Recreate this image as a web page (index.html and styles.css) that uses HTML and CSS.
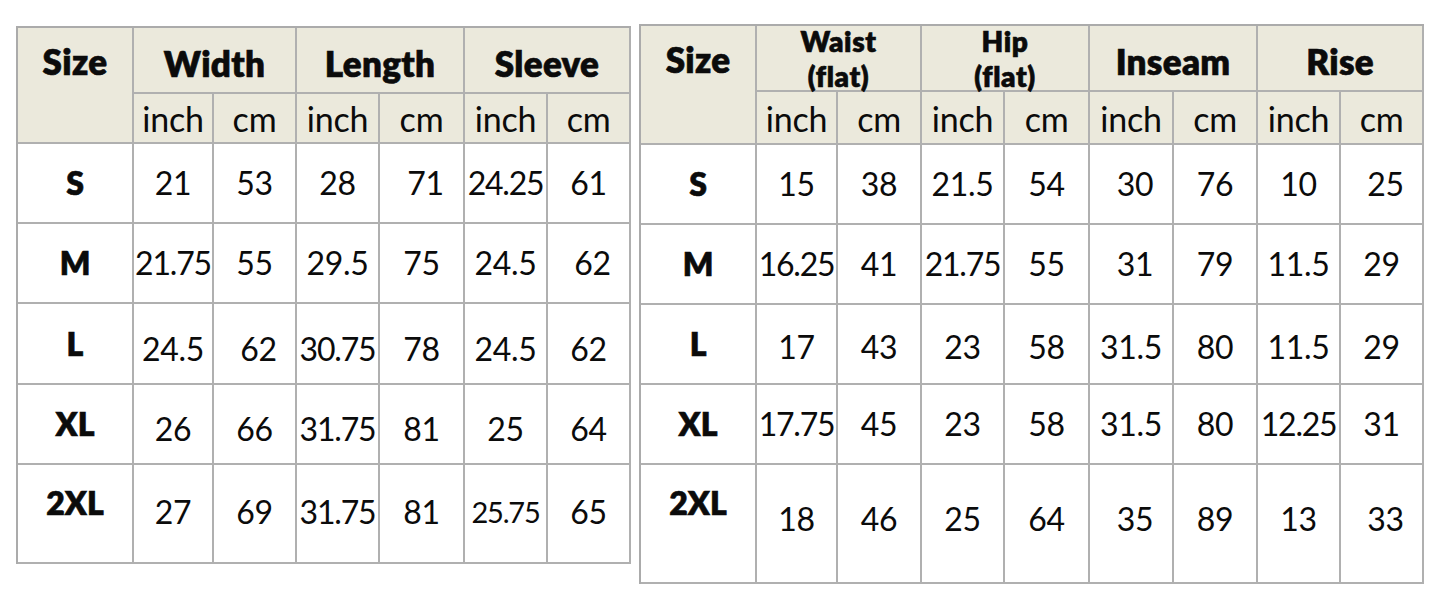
FILE: index.html
```html
<!DOCTYPE html>
<html lang="en">
<head>
<meta charset="utf-8">
<title>Size chart</title>
<link rel="stylesheet" href="styles.css">
</head>
<body>
<main class="sheet">
  <table class="chart chart-top">
    <colgroup>
      <col class="c116"><col class="c80"><col class="c83"><col class="c83"><col class="c85"><col class="c83"><col class="c83">
    </colgroup>
    <thead>
      <tr class="h1">
        <th rowspan="2" class="size-h">Size</th>
        <th colspan="2">Width</th>
        <th colspan="2">Length</th>
        <th colspan="2">Sleeve</th>
      </tr>
      <tr class="h2 h2a">
        <th class="unit">inch</th><th class="unit">cm</th>
        <th class="unit">inch</th><th class="unit">cm</th>
        <th class="unit">inch</th><th class="unit">cm</th>
      </tr>
    </thead>
    <tbody>
      <tr class="r80">
        <th class="lbl">S</th><td>21</td><td>53</td><td>28</td><td class="shr">71</td><td class="tight">24.25</td><td>61</td>
      </tr>
      <tr class="r80">
        <th class="lbl">M</th><td class="tight">21.75</td><td>55</td><td>29.5</td><td>75</td><td>24.5</td><td class="shr">62</td>
      </tr>
      <tr class="r81 low">
        <th class="lbl">L</th><td>24.5</td><td class="shr">62</td><td class="tight">30.75</td><td>78</td><td>24.5</td><td>62</td>
      </tr>
      <tr class="r80 low">
        <th class="lbl">XL</th><td>26</td><td>66</td><td class="tight">31.75</td><td>81</td><td>25</td><td>64</td>
      </tr>
      <tr class="r99 lasta">
        <th class="lbl up">2XL</th><td>27</td><td>69</td><td class="tight">31.75</td><td>81</td><td class="tight small">25.75</td><td>65</td>
      </tr>
    </tbody>
  </table>

  <table class="chart chart-right">
    <colgroup>
      <col class="c116"><col class="c81"><col class="c84"><col class="c83"><col class="c85"><col class="c84"><col class="c84"><col class="c83"><col class="c83">
    </colgroup>
    <thead>
      <tr class="h1">
        <th rowspan="2" class="size-h">Size</th>
        <th colspan="2"><div class="two">Waist<br>(flat)</div></th>
        <th colspan="2"><div class="two">Hip<br>(flat)</div></th>
        <th colspan="2">Inseam</th>
        <th colspan="2">Rise</th>
      </tr>
      <tr class="h2 h2b">
        <th class="unit">inch</th><th class="unit">cm</th>
        <th class="unit">inch</th><th class="unit">cm</th>
        <th class="unit">inch</th><th class="unit">cm</th>
        <th class="unit">inch</th><th class="unit">cm</th>
      </tr>
    </thead>
    <tbody>
      <tr class="r80">
        <th class="lbl">S</th><td>15</td><td>38</td><td>21.5</td><td>54</td><td class="shr">30</td><td>76</td><td>10</td><td class="shr">25</td>
      </tr>
      <tr class="r80">
        <th class="lbl">M</th><td class="tight">16.25</td><td>41</td><td class="tight">21.75</td><td>55</td><td class="shr">31</td><td>79</td><td>11.5</td><td>29</td>
      </tr>
      <tr class="r80 lowb">
        <th class="lbl">L</th><td>17</td><td>43</td><td>23</td><td>58</td><td>31.5</td><td>80</td><td>11.5</td><td>29</td>
      </tr>
      <tr class="r80">
        <th class="lbl">XL</th><td class="tight">17.75</td><td>45</td><td>23</td><td>58</td><td>31.5</td><td>80</td><td class="tight">12.25</td><td>31</td>
      </tr>
      <tr class="r119 lastb">
        <th class="lbl up2">2XL</th><td>18</td><td>46</td><td>25</td><td>64</td><td class="shr">35</td><td>89</td><td>13</td><td class="shr">33</td>
      </tr>
    </tbody>
  </table>
</main>
</body>
</html>
```

FILE: styles.css
```css
* { box-sizing: border-box; }

html, body {
  margin: 0;
  padding: 0;
  background: #ffffff;
}

body {
  font-family: "Lato", "Liberation Sans", sans-serif;
  color: #0b0b0b;
}

.sheet {
  display: flex;
  align-items: flex-start;
  gap: 8px;
  padding: 24px 0 0 16px;
}

.chart {
  border-collapse: separate;
  border-spacing: 0;
  table-layout: fixed;
  border-top: 2px solid #ababab;
  border-left: 2px solid #ababab;
  background: #ffffff;
}

.chart-top { width: 615px; margin-top: 2px; }
.chart-right { width: 785px; }

.c116 { width: 116px; }
.c80 { width: 80px; }
.c81 { width: 81px; }
.c83 { width: 83px; }
.c84 { width: 84px; }
.c85 { width: 85px; }

.chart th,
.chart td {
  border-right: 2px solid #b0b0b0;
  border-bottom: 2px solid #b0b0b0;
  padding: 0;
  text-align: center;
  vertical-align: middle;
  white-space: nowrap;
}

.chart thead th {
  background: #ebe9dc;
}

.h1 { height: 66px; }
.h2a { height: 50px; }
.h2b { height: 53px; }
.r80 { height: 80px; }
.r81 { height: 81px; }
.r99 { height: 99px; }
.r119 { height: 119px; }

.h1 th {
  font-weight: 800;
  font-size: 35px;
  line-height: 36px;
  padding-top: 6px;
  letter-spacing: 0.3px;
  -webkit-text-stroke: 0.6px #0b0b0b;
}

.h1 th.size-h {
  vertical-align: top;
  padding-top: 15px;
}

.two {
  font-size: 28px;
  line-height: 35px;
  margin: -10px 0 -6px;
  letter-spacing: 0.6px;
}

.unit {
  font-weight: 400;
  font-size: 34px;
  line-height: 36px;
  padding-top: 2px !important;
  letter-spacing: -0.2px;
}

.chart td {
  font-size: 32px;
  line-height: 36px;
  font-weight: 400;
  letter-spacing: -0.3px;
}

.chart td.tight { letter-spacing: -1.2px; }
.chart td.small { font-size: 29px; }
.chart td.shr { padding-left: 8px; }

.lbl {
  font-weight: 800;
  font-size: 32px;
  line-height: 36px;
  background: #ffffff;
  -webkit-text-stroke: 0.6px #0b0b0b;
}

.lbl.up { padding-bottom: 22px; }
.lbl.up2 { padding-bottom: 42px; }

.low td { padding-top: 10px; }
.lowb td { padding-top: 5px; }
.lasta td { padding-bottom: 4px; }
.lastb td { padding-bottom: 10px; }
```
